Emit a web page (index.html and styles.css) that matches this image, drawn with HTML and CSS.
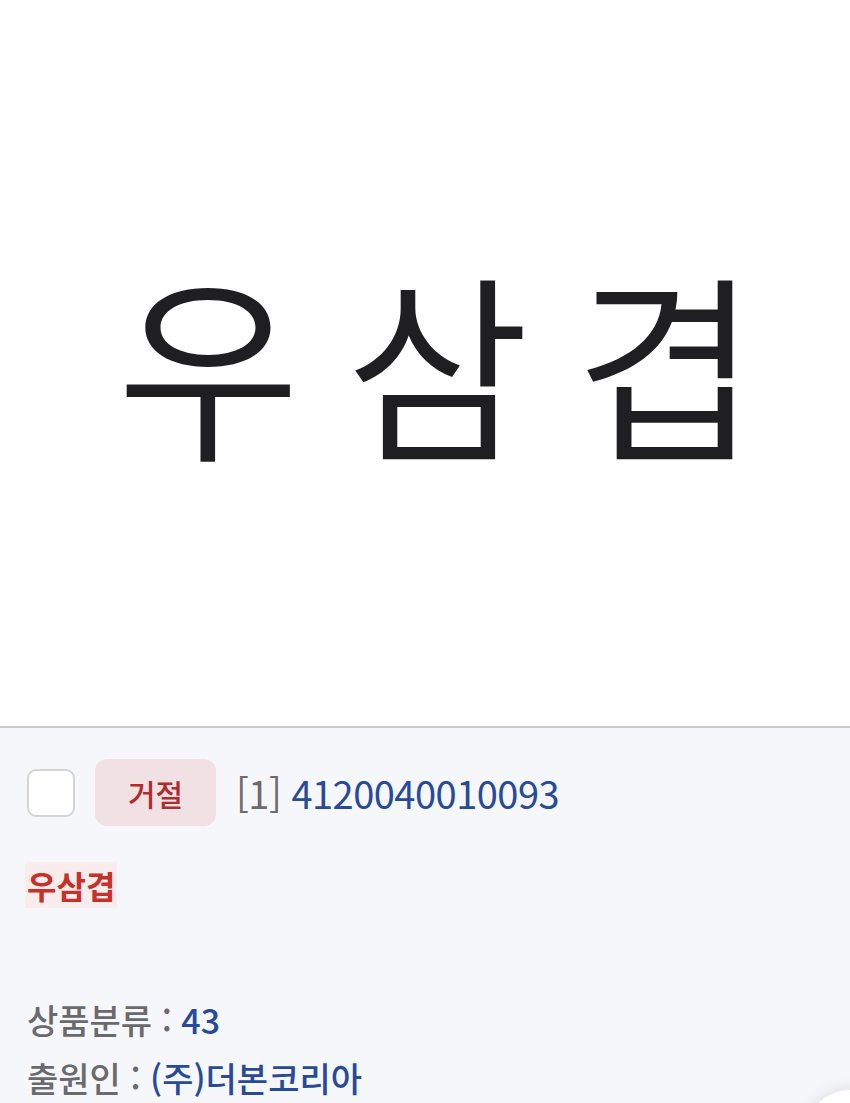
FILE: index.html
```html
<!DOCTYPE html>
<html lang="ko">
<head>
<meta charset="utf-8">
<link rel="stylesheet" href="styles.css">
</head>
<body>
<div class="hero">
  <div class="mark">우삼겹</div>
</div>
<div class="card">
  <div class="row">
    <span class="check"></span>
    <span class="badge">거절</span>
    <span class="num"><span class="idx">[1]</span> 4120040010093</span>
  </div>
  <div class="title">우삼겹</div>
  <div class="info">
    <div class="line"><span class="label">상품분류 <span class="colon">:</span> </span><span class="val">43</span></div>
    <div class="line"><span class="label">출원인 <span class="colon">:</span> </span><span class="val">(주)더본코리아</span></div>
  </div>
</div>
<div class="fab"></div>
</body>
</html>
```

FILE: styles.css
```css
html, body {
  margin: 0;
  padding: 0;
  width: 850px;
  height: 1103px;
  overflow: hidden;
  background: #f6f7fb;
  font-family: "Noto Sans CJK KR", "Noto Sans", sans-serif;
}
.hero {
  height: 726px;
  background: #ffffff;
  border-bottom: 2px solid #cbcbcd;
  display: flex;
  align-items: center;
  justify-content: center;
}
.mark {
  font-size: 200px;
  font-weight: 350;
  color: #1f1f21;
  letter-spacing: 45px;
  line-height: 1;
  margin-bottom: 8px;
  margin-left: 70px;
}
.card {
  padding: 31px 27px 0 27px;
}
.row {
  display: flex;
  align-items: center;
  height: 67px;
}
.check {
  width: 44px;
  height: 44px;
  border: 2px solid #d4d4d6;
  border-radius: 9px;
  background: #ffffff;
  margin-right: 20px;
}
.badge {
  width: 121px;
  height: 67px;
  border-radius: 12px;
  background: #f2e1e4;
  color: #b02c2a;
  font-size: 30px;
  font-weight: 500;
  display: flex;
  align-items: center;
  justify-content: center;
  margin-right: 20px;
}
.num {
  font-size: 38px;
  color: #274a9a;
  letter-spacing: -0.5px;
}
.idx {
  color: #6b6b6d;
}
.title {
  display: inline-block;
  margin-top: 36px;
  font-size: 32px;
  font-weight: 700;
  color: #c8302a;
  background: #f9ecec;
  padding: 0 2px;
  margin-left: -2px;
  line-height: 46px;
}
.info {
  margin-top: 83px;
}
.line {
  font-size: 34px;
  font-weight: 500;
  line-height: 58px;
}
.label {
  color: #6a6a6c;
}
.colon {
  display: inline-block;
  margin: 0;
}
.val {
  color: #274a9a;
}
.fab {
  position: absolute;
  left: 805px;
  top: 1090px;
  width: 90px;
  height: 90px;
  border-radius: 50%;
  background: #ffffff;
  box-shadow: 0 0 18px rgba(0,0,0,0.12);
}
```
